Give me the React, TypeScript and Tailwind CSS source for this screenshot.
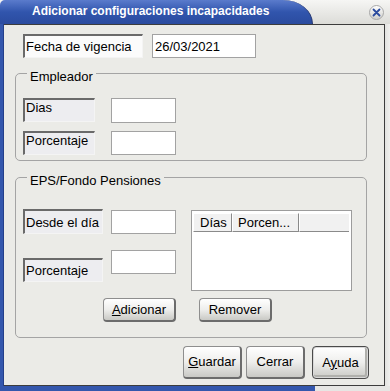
import React from "react"

function SunkenLabel({ text, w, h, bg, top }: { text: string; w: number; h: number; bg: string; top?: boolean }) {
  return (
    <div
      className={`box-border flex ${top ? "items-start" : "items-center"} border-t-2 border-l-2 border-t-[#6a6a6a] border-l-[#6a6a6a] border-r border-b border-r-[#f4f4f4] border-b-[#f4f4f4] pl-[1px] leading-[15px] whitespace-nowrap`}
      style={{ width: w, height: h, background: bg }}
    >
      {text}
    </div>
  )
}

function Field({ w, h, value }: { w: number; h: number; value?: string }) {
  return (
    <div
      className="box-border flex items-center bg-white border border-[#a2a2a2] pl-[2px] leading-[15px]"
      style={{ width: w, height: h }}
    >
      {value}
    </div>
  )
}

function Btn({ children, w, h, main }: { children: React.ReactNode; w: number; h: number; main?: boolean }) {
  return (
    <div
      className={`box-border flex items-center justify-center rounded-[4px] bg-gradient-to-b from-[#ffffff] via-[#eeeeec] to-[#c9c9c5] ${
        main
          ? "border border-[#4a4a4a] shadow-[inset_0_0_0_1px_#d8d8d8,inset_-1px_-1px_0_2px_#b0b0ac]"
          : "border border-[#8e8e8e] border-r-2 border-b-2 border-r-[#6c6c6c] border-b-[#6c6c6c]"
      }`}
      style={{ width: w, height: h }}
    >
      {children}
    </div>
  )
}

function Group({ legend, h, children }: { legend: string; h: number; children: React.ReactNode }) {
  return (
    <div
      className="box-border ml-[11px] w-[352px] rounded-[5px] border border-[#a4a4a4]"
      style={{ height: h }}
    >
      <div className="-mt-[5px] ml-[11px] w-fit px-[3px] h-[15px] leading-[15px] bg-[#ebebe7]">{legend}</div>
      {children}
    </div>
  )
}

export default function App() {
  return (
    <div className="w-[390px] h-[391px] flex flex-col bg-[#3457ad] font-['Liberation_Sans',Arial,sans-serif] text-[13px] text-black overflow-hidden">
      {/* title bar */}
      <div className="h-[24px] shrink-0 flex bg-gradient-to-b from-[#f6f6f4] to-[#dcdcd8]">
        <div className="w-[313px] h-full rounded-tl-[5px] rounded-tr-[30px_24px] border-r border-[#22346e] bg-gradient-to-b from-[#5a7bcc] via-[#3155ad] to-[#2b4b9f] flex items-center pl-[32px] pb-[2px] text-white font-bold text-[12px] whitespace-nowrap">
          Adicionar configuraciones incapacidades
        </div>
        <div className="flex-1 flex items-center justify-end pr-[6px]">
          <div className="w-[15px] h-[15px] rounded-full border border-[#a8a8a8] bg-gradient-to-b from-[#ffffff] to-[#d0d0cc] flex items-center justify-center">
            <svg width="9" height="9" viewBox="0 0 9 9">
              <path d="M1.5 1.5 L7.5 7.5 M7.5 1.5 L1.5 7.5" stroke="#2a4a9e" strokeWidth="1.8" strokeLinecap="round" />
            </svg>
          </div>
        </div>
      </div>

      {/* body */}
      <div className="h-[362px] shrink-0 flex">
        <div className="w-[4px] border-r border-[#243f8a]"></div>
        <div className="w-[381px] box-border border-t border-r border-b border-[#3c3c3c] bg-[#ebebe7] flex flex-col">
          {/* fecha row */}
          <div className="flex mt-[9px] ml-[19px]">
            <SunkenLabel text="Fecha de vigencia" w={120} h={24} bg="#fbfbfb" />
            <div className="ml-[9px]">
              <Field w={104} h={24} value="26/03/2021" />
            </div>
          </div>

          {/* empleador */}
          <div className="mt-[15px]">
            <Group legend="Empleador" h={88}>
              <div className="mt-[14px] ml-[7px] flex flex-col gap-[8px]">
                <div className="flex gap-[16px]">
                  <SunkenLabel text="Dias" w={72} h={24} bg="#ededf0" top />
                  <Field w={65} h={25} />
                </div>
                <div className="flex gap-[16px]">
                  <SunkenLabel text="Porcentaje" w={72} h={24} bg="#ededf0" top />
                  <Field w={65} h={24} />
                </div>
              </div>
            </Group>
          </div>

          {/* eps */}
          <div className="mt-[16px]">
            <Group legend="EPS/Fondo Pensiones" h={161}>
              <div className="mt-[21px] ml-[7px] flex">
                <div className="flex flex-col">
                  <SunkenLabel text="Desde el día" w={80} h={25} bg="#ededf0" />
                  <div className="mt-[24px]">
                    <SunkenLabel text="Porcentaje" w={80} h={24} bg="#ededf0" />
                  </div>
                </div>
                <div className="ml-[8px] flex flex-col">
                  <div className="mt-[1px]">
                    <Field w={65} h={24} />
                  </div>
                  <div className="mt-[16px]">
                    <Field w={65} h={24} />
                  </div>
                </div>
                <div className="ml-[15px] mt-[1px] w-[161px] h-[81px] box-border bg-white border border-[#9c9c9c] pt-[2px] pl-[1px]">
                  <div className="flex h-[19px] leading-[15px]">
                    <div className="box-border w-[39px] h-full bg-[#f1f1f1] border-t border-l border-white border-r border-b border-r-[#8a8a8a] border-b-[#8a8a8a] px-[6px] flex items-center">
                      Días
                    </div>
                    <div className="box-border w-[67px] h-full bg-[#f1f1f1] border-t border-l border-white border-r border-b border-r-[#8a8a8a] border-b-[#8a8a8a] px-[5px] flex items-center whitespace-nowrap">
                      Porcen...
                    </div>
                    <div className="box-border w-[50px] h-full bg-[#f1f1f1] border-t border-l border-white border-b border-b-[#8a8a8a]"></div>
                  </div>
                </div>
              </div>
              <div className="mt-[7px] ml-[87px] flex gap-[23px]">
                <Btn w={73} h={24}>
                  <span>
                    <span className="underline">A</span>dicionar
                  </span>
                </Btn>
                <Btn w={73} h={24}>
                  Remover
                </Btn>
              </div>
            </Group>
          </div>

          {/* bottom buttons */}
          <div className="mt-[8px] flex justify-end pr-[15px]">
            <Btn w={59} h={33}>
              <span>
                <span className="underline">G</span>uardar
              </span>
            </Btn>
            <div className="ml-[4px]">
              <Btn w={59} h={33}>
                Cerrar
              </Btn>
            </div>
            <div className="ml-[7px]">
              <Btn w={57} h={33} main>
                <span>
                  A<span className="underline">y</span>uda
                </span>
              </Btn>
            </div>
          </div>
        </div>
        <div className="flex-1 bg-gradient-to-r from-[#e2e2e0] to-[#f0f0ee]"></div>
      </div>

      {/* bottom edge */}
      <div className="flex-1 flex">
        <div className="w-[315px] bg-[#3457ad]"></div>
        <div className="flex-1 bg-[#e6e6e4]"></div>
      </div>
    </div>
  )
}
